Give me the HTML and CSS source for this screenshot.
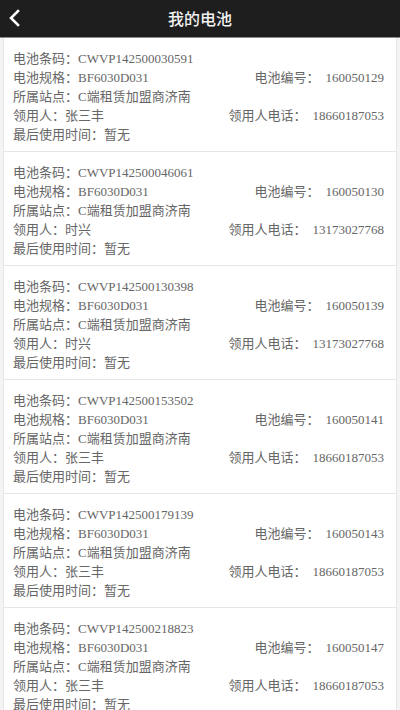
FILE: index.html
```html
<!DOCTYPE html>
<html lang="zh">
<head>
<meta charset="utf-8">
<link rel="stylesheet" href="styles.css">
</head>
<body>
<header class="topbar">
  <svg class="back" width="14" height="18" viewBox="0 0 14 18"><path d="M11 2 L4 9 L11 16" fill="none" stroke="#fff" stroke-width="2.6" stroke-linecap="square"/></svg>
  <h1 class="title">我的电池</h1>
</header>
<main class="list">
  <section class="card">
    <div class="row"><span>电池条码：CWVP142500030591</span></div>
    <div class="row"><span>电池规格：BF6030D031</span><span>电池编号：<span class="val">160050129</span></span></div>
    <div class="row"><span>所属站点：C端租赁加盟商济南</span></div>
    <div class="row"><span>领用人：张三丰</span><span>领用人电话：<span class="val">18660187053</span></span></div>
    <div class="row"><span>最后使用时间：暂无</span></div>
  </section>
  <section class="card">
    <div class="row"><span>电池条码：CWVP142500046061</span></div>
    <div class="row"><span>电池规格：BF6030D031</span><span>电池编号：<span class="val">160050130</span></span></div>
    <div class="row"><span>所属站点：C端租赁加盟商济南</span></div>
    <div class="row"><span>领用人：时兴</span><span>领用人电话：<span class="val">13173027768</span></span></div>
    <div class="row"><span>最后使用时间：暂无</span></div>
  </section>
  <section class="card">
    <div class="row"><span>电池条码：CWVP142500130398</span></div>
    <div class="row"><span>电池规格：BF6030D031</span><span>电池编号：<span class="val">160050139</span></span></div>
    <div class="row"><span>所属站点：C端租赁加盟商济南</span></div>
    <div class="row"><span>领用人：时兴</span><span>领用人电话：<span class="val">13173027768</span></span></div>
    <div class="row"><span>最后使用时间：暂无</span></div>
  </section>
  <section class="card">
    <div class="row"><span>电池条码：CWVP142500153502</span></div>
    <div class="row"><span>电池规格：BF6030D031</span><span>电池编号：<span class="val">160050141</span></span></div>
    <div class="row"><span>所属站点：C端租赁加盟商济南</span></div>
    <div class="row"><span>领用人：张三丰</span><span>领用人电话：<span class="val">18660187053</span></span></div>
    <div class="row"><span>最后使用时间：暂无</span></div>
  </section>
  <section class="card">
    <div class="row"><span>电池条码：CWVP142500179139</span></div>
    <div class="row"><span>电池规格：BF6030D031</span><span>电池编号：<span class="val">160050143</span></span></div>
    <div class="row"><span>所属站点：C端租赁加盟商济南</span></div>
    <div class="row"><span>领用人：张三丰</span><span>领用人电话：<span class="val">18660187053</span></span></div>
    <div class="row"><span>最后使用时间：暂无</span></div>
  </section>
  <section class="card">
    <div class="row"><span>电池条码：CWVP142500218823</span></div>
    <div class="row"><span>电池规格：BF6030D031</span><span>电池编号：<span class="val">160050147</span></span></div>
    <div class="row"><span>所属站点：C端租赁加盟商济南</span></div>
    <div class="row"><span>领用人：张三丰</span><span>领用人电话：<span class="val">18660187053</span></span></div>
    <div class="row"><span>最后使用时间：暂无</span></div>
  </section>
</main>
</body>
</html>
```
FILE: styles.css
```css
* { box-sizing: border-box; }
html, body { margin: 0; padding: 0; }
body {
  width: 400px;
  height: 710px;
  overflow: hidden;
  background: #f4f4f4;
  font-family: "Liberation Serif", "Noto Sans CJK SC", serif;
}
.topbar {
  height: 38px;
  background: #1e1e1e;
  border-bottom: 1px solid #8c8c8c;
  display: flex;
  align-items: center;
  justify-content: center;
  position: relative;
}
.back {
  position: absolute;
  left: 7px;
  top: 9px;
}
.title {
  margin: 0;
  color: #f2f2f2;
  font-family: "Noto Sans CJK SC", sans-serif;
  font-size: 16px;
  font-weight: 500;
  line-height: 37px;
}
.list {
  display: flex;
  flex-direction: column;
}
.card {
  background: #fff;
  border: 1px solid #e6e6e6;
  border-top: none;
  margin: 0 3px;
  height: 114px;
  padding: 11px 12px 0 9px;
  display: flex;
  flex-direction: column;
}
.row {
  display: flex;
  justify-content: space-between;
  height: 19px;
  line-height: 19px;
  font-size: 13px;
  color: #666;
  white-space: nowrap;
}
.val {
  margin-left: 6px;
}
```
